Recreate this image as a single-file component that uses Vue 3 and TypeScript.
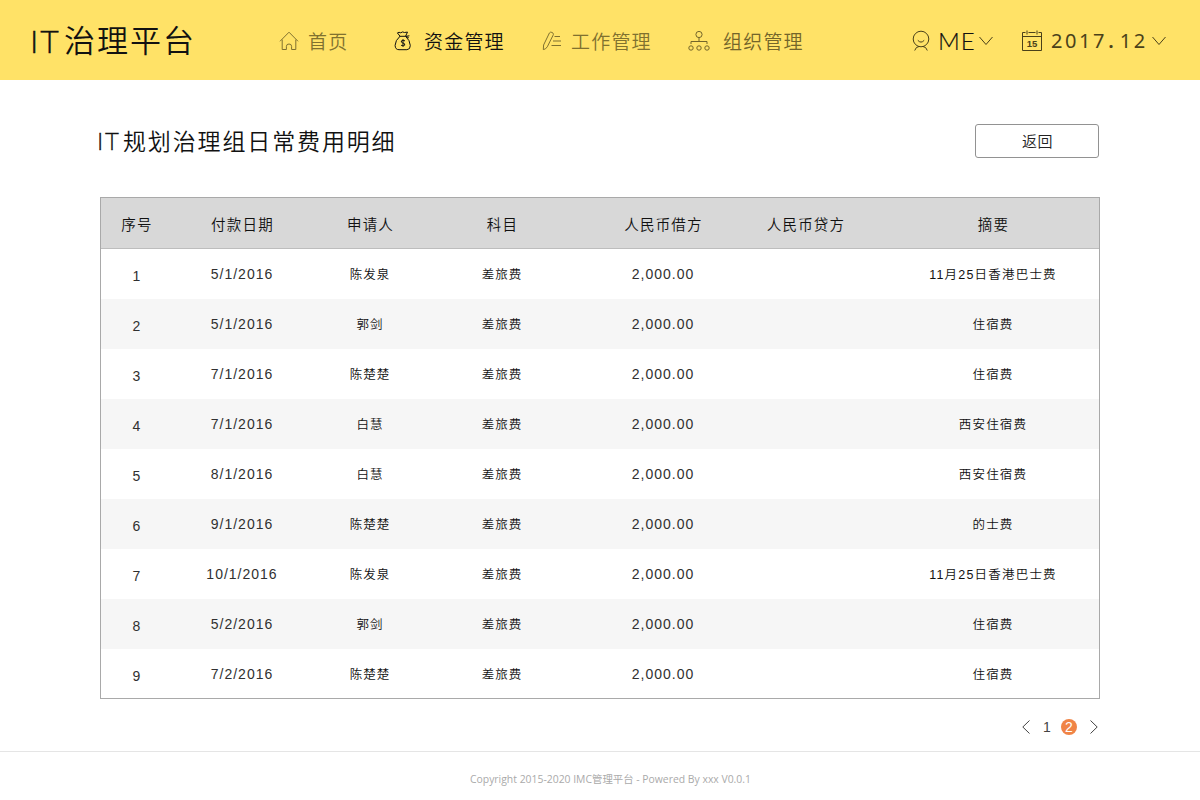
<script setup lang="ts">
interface Entry {
  no: number
  date: string
  person: string
  subject: string
  debit: string
  credit: string
  note: string
}

const headings: string[] = ['序号', '付款日期', '申请人', '科目', '人民币借方', '人民币贷方', '摘要']

const source: [string, string, string][] = [
  ['5/1/2016', '陈发泉', '11月25日香港巴士费'],
  ['5/1/2016', '郭剑', '住宿费'],
  ['7/1/2016', '陈楚楚', '住宿费'],
  ['7/1/2016', '白慧', '西安住宿费'],
  ['8/1/2016', '白慧', '西安住宿费'],
  ['9/1/2016', '陈楚楚', '的士费'],
  ['10/1/2016', '陈发泉', '11月25日香港巴士费'],
  ['5/2/2016', '郭剑', '住宿费'],
  ['7/2/2016', '陈楚楚', '住宿费'],
]

const entries: Entry[] = source.map(([date, person, note], i) => ({
  no: i + 1,
  date,
  person,
  subject: '差旅费',
  debit: '2,000.00',
  credit: '',
  note,
}))
</script>

<template>
  <div class="page">
    <header class="topbar">
      <div class="logo"><span class="latin">IT</span><span>治理平台</span></div>
      <nav class="nav">
        <a class="item home">
          <svg width="20" height="20" viewBox="0 0 20 20"><path d="M1 10.3 10 1.2l9 9.1M3.2 8.6v9.9h4.2v-3.2q0-2.3 2.6-2.3t2.6 2.3v3.2h4.2V8.6" /></svg>
          <span>首页</span>
        </a>
        <a class="item funds active">
          <svg width="18" height="20" viewBox="0 0 18 20">
            <path d="M6 5.2 3.4 1.9Q5 .7 6.7 1.8 8.700 .2 10.400 1.500L13.500 1.100 11.600 5.100M5.200 5.300H12.500M12 5.300l3.400-.5M12.200 5.500l2.600 1.400M5.800 5.500Q1.300 9.300 1.100 14.300q.1 4.400 3.900 4.400h7.900q3.500-.2 3.400-4.200-.3-5.200-4.500-9" />
            <path d="M11 9.900Q8.800 8.600 7.500 9.800q-1 1.500 1.200 2.100 2.700.6 2 2.300-1.300 1.300-3.600.1M9 8.200v7.500" />
          </svg>
          <span>资金管理</span>
        </a>
        <a class="item work">
          <svg width="20" height="20" viewBox="0 0 20 20"><path d="M1.300 18.600 1.600 14 7.400 2q.7-1.300 2.500-.6t1.500 2.200L5.300 15.800q-1.700 2.700-4 2.800M12.500 5.500H18M11 10h8M9.500 14.500H19" /></svg>
          <span>工作管理</span>
        </a>
        <a class="item org">
          <svg width="22" height="20" viewBox="0 0 22 20">
            <circle cx="11" cy="3.500" r="3.100" /><circle cx="3" cy="17" r="2.200" /><circle cx="11" cy="17" r="2.200" /><circle cx="19" cy="17" r="2.200" />
            <path d="M11 6.600v3.900M3 13v-2.500h16V13" />
          </svg>
          <span>组织管理</span>
        </a>
      </nav>
      <div class="user">
        <svg width="18" height="22" viewBox="0 0 18 22"><circle cx="9" cy="9" r="7.800" /><path d="M5.800 10.300q3.200 3.600 6.400 0M2.700 20.500q1.200-3.800 4.300-4M15.300 20.500q-1.200-3.800-4.300-4" /></svg>
        <span class="me">ME</span>
        <svg class="chev" width="14" height="10" viewBox="0 0 14 10"><path d="m.5 1 6.500 7.500L13.500 1" /></svg>
      </div>
      <div class="period">
        <svg width="22" height="22" viewBox="0 0 22 22">
          <path d="M4.500 2.500h-3v18h19v-18h-3M7.500 2.500h7M1.500 6.500h19M6 .5v4M16 .5v4" />
          <text x="11" y="17" text-anchor="middle">15</text>
        </svg>
        <span class="month">2017<span class="dot">.</span>12</span>
        <svg class="chev" width="14" height="10" viewBox="0 0 14 10"><path d="m.5 1 6.500 7.500L13.500 1" /></svg>
      </div>
    </header>

    <main class="content">
      <div class="heading">
        <h1><span class="latin">IT</span><span>规划治理组日常费用明细</span></h1>
        <button type="button">返回</button>
      </div>

      <section class="table">
        <div class="row head">
          <span v-for="h in headings" :key="h">{{ h }}</span>
        </div>
        <div v-for="e in entries" :key="e.no" class="row">
          <span class="no">{{ e.no }}</span>
          <span class="num">{{ e.date }}</span>
          <span class="text">{{ e.person }}</span>
          <span class="text">{{ e.subject }}</span>
          <span class="num">{{ e.debit }}</span>
          <span class="num">{{ e.credit }}</span>
          <span class="text">{{ e.note }}</span>
        </div>
      </section>

      <div class="pager">
        <svg width="8" height="14" viewBox="0 0 8 14"><path d="M7.500.5.800 7l6.700 6.500" /></svg>
        <span class="pg">1</span>
        <span class="pg current">2</span>
        <svg width="8" height="14" viewBox="0 0 8 14"><path d="M.5.500 7.200 7 .5 13.500" /></svg>
      </div>
    </main>

    <footer class="footer">Copyright 2015-2020 IMC管理平台 - Powered By xxx V0.0.1</footer>
  </div>
</template>

<style>
body {
  margin: 0;
  background: #fff;
}
</style>

<style scoped>
.page {
  width: 1200px;
  height: 800px;
  overflow: hidden;
  display: flex;
  flex-direction: column;
  background: #fff;
  color: #111;
  font-family: "Liberation Sans", "Noto Sans CJK SC", sans-serif;
  font-weight: 350;
  white-space: nowrap;
}
svg {
  display: block;
  flex: none;
  fill: none;
  stroke: currentColor;
  stroke-width: 1;
}
.topbar {
  height: 80px;
  flex: none;
  box-sizing: border-box;
  padding: 1px 0 0 30px;
  display: flex;
  align-items: center;
  background: #ffe267;
}
.logo {
  width: 249px;
  height: 48px;
  margin-top: -3px;
  line-height: 48px;
  display: flex;
  font-size: 31px;
  letter-spacing: 2px;
  font-family: "Noto Sans CJK SC", sans-serif;
}
.logo .latin {
  width: 34px;
  padding-top: 2px;
  font-family: Lato, sans-serif;
  font-weight: 300;
  font-size: 32px;
  -webkit-text-stroke: 0.4px #111;
}
.nav {
  display: flex;
  width: 632px;
}
.item {
  display: flex;
  align-items: center;
  height: 28px;
  font-family: "Noto Sans CJK SC", sans-serif;
  font-size: 19px;
  line-height: 28px;
  letter-spacing: 1.2px;
  color: #80712f;
}
.item.active {
  color: #111;
}
.home { width: 115px; gap: 9px; }
.funds { width: 148px; gap: 12px; }
.work { width: 146px; gap: 9px; }
.org { gap: 13px; color: #73652a; }
.user {
  display: flex;
  align-items: center;
  width: 110px;
  margin-left: 1px;
  color: #4a411a;
}
.me {
  width: 41px;
  margin-left: 8px;
  font: 300 24px/30px Lato, sans-serif;
  letter-spacing: 1px;
  color: #111;
  -webkit-text-stroke: 0.2px #111;
}
.period {
  display: flex;
  align-items: center;
  margin-left: -1px;
  color: #4a411a;
}
.period text {
  fill: currentColor;
  stroke: none;
  font: 700 9.500px "Liberation Sans", sans-serif;
}
.month {
  width: 101px;
  margin-left: 8px;
  font: 400 20px/28px "Noto Sans", sans-serif;
  letter-spacing: 2.600px;
}
.month .dot {
  padding: 0 3.500px 0 1px;
  font-weight: 600;
}
.content {
  height: 671px;
  flex: none;
  box-sizing: border-box;
  padding: 44px 100px 0;
}
.heading {
  height: 34px;
  display: flex;
  justify-content: space-between;
}
h1 {
  display: flex;
  margin: -1px 0 0 -3px;
  font: 350 23px/34px "Noto Sans CJK SC", sans-serif;
  letter-spacing: 1.860px;
}
h1 .latin {
  width: 26px;
  padding-top: 1px;
  font-family: Lato, sans-serif;
  font-weight: 300;
  font-size: 24px;
  -webkit-text-stroke: 0.3px #111;
}
button {
  width: 124px;
  height: 34px;
  margin-right: 1px;
  padding: 0 0 0 1px;
  border: 1px solid #929292;
  border-radius: 3px;
  background: #fff;
  color: #222;
  font: 350 15px/30px "Noto Sans CJK SC", sans-serif;
  letter-spacing: 0.500px;
}
.table {
  margin-top: 39px;
  height: 502px;
  box-sizing: border-box;
  border: 1px solid #a9a9a9;
}
.row {
  height: 50px;
  box-sizing: border-box;
  display: grid;
  grid-template-columns: 71px 140px 116px 148px 174px 111px 1fr;
  align-items: center;
  justify-items: center;
  font-size: 12.500px;
  letter-spacing: 1px;
  color: #111;
}
.row:nth-child(odd) {
  background: #f6f6f6;
}
.row > span:last-child {
  margin-left: 26px;
}
.row .text {
  padding-bottom: 2px;
}
.row > .text:last-child {
  letter-spacing: 1.200px;
}
.row.head {
  height: 51px;
  border-bottom: 1px solid #bdbdbd;
  background: #d8d8d8;
  font-size: 14.500px;
  letter-spacing: 1.200px;
}
.row.head > span {
  padding-left: 1px;
}
.num,
.no {
  font-size: 14px;
  letter-spacing: 1px;
  color: #303030;
}
.no {
  padding: 3px 0 0 1px;
}
.pager {
  height: 16px;
  margin: 20px 2px 0 0;
  display: flex;
  justify-content: flex-end;
  align-items: center;
  color: #444;
}
.pg {
  width: 16px;
  height: 16px;
  margin-left: 9px;
  text-align: center;
  font-size: 14px;
  line-height: 16px;
}
.pg.current {
  margin: 0 13px 0 6px;
  border-radius: 50%;
  background: #f08446;
  color: #fff;
}
.footer {
  height: 49px;
  box-sizing: border-box;
  padding: 20px 0 0 470px;
  border-top: 1px solid #e5e5e5;
  font: 400 10.400px/14px "Open Sans", "Noto Sans CJK SC", sans-serif;
  color: #aaa;
}
</style>
